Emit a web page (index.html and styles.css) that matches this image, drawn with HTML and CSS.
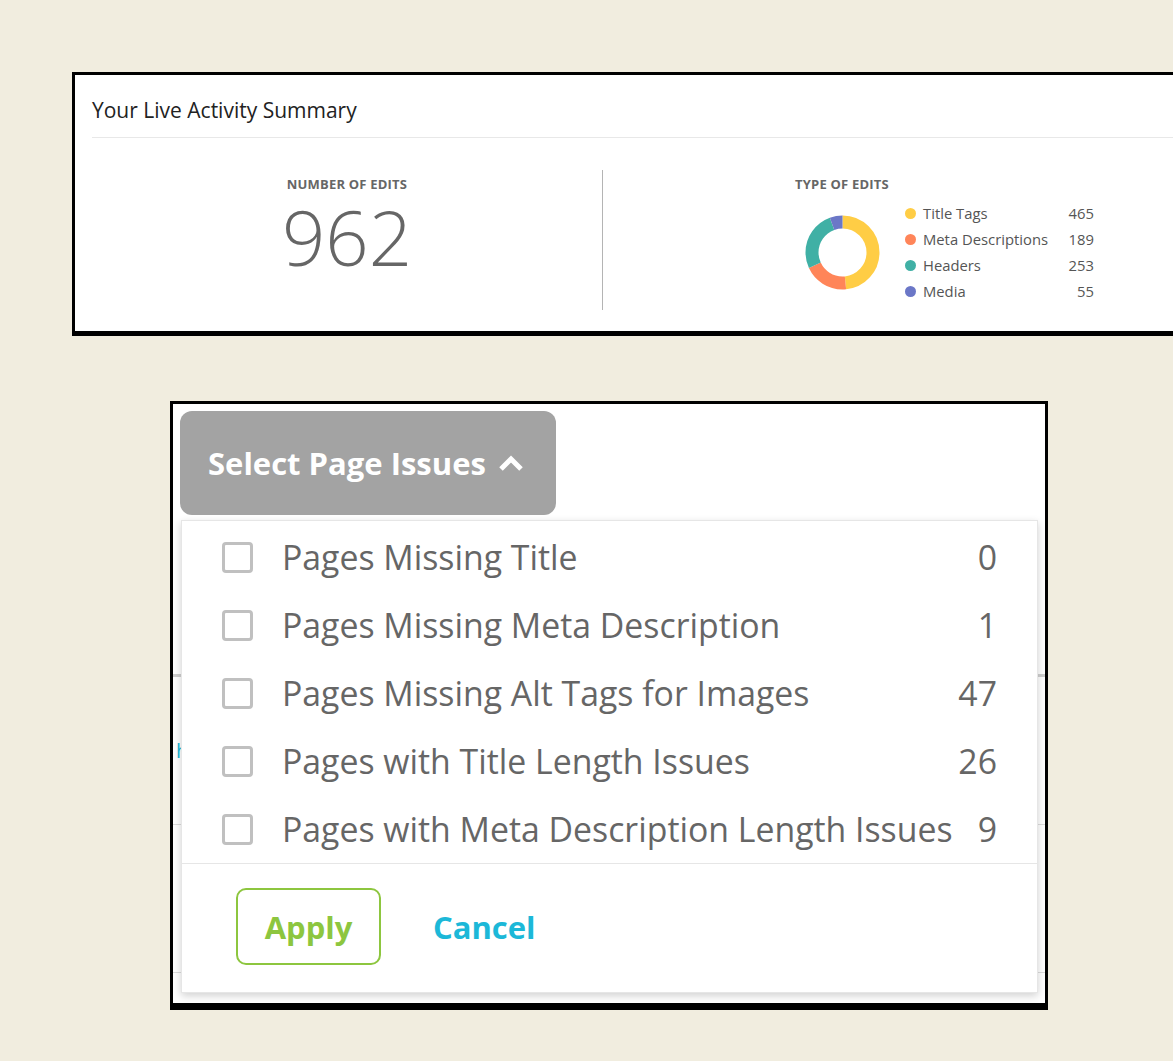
FILE: index.html
```html
<!DOCTYPE html>
<html lang="en">
  <head>
    <meta charset="UTF-8" />
    <meta name="viewport" content="width=device-width, initial-scale=1.0" />
    <title>Live Activity Summary</title>
    <link rel="stylesheet" href="styles.css">
  </head>
  <body>
    <div class="summary">
      <div class="summary-head">Your Live Activity Summary</div>
      <div class="stats">
        <div class="stat-count">
          <div class="stat-label">Number of Edits</div>
          <div class="stat-number">962</div>
        </div>
        <div class="stat-types">
          <div class="stat-label">Type of Edits</div>
          <div class="types-row">
            <svg class="donut" width="75" height="75" viewBox="0 0 75 75">
              <g transform="rotate(-90 37.5 37.5)" fill="none" stroke-width="13">
                <circle cx="37.5" cy="37.5" r="30.5" stroke="#ffcd45" stroke-dasharray="92.63 191.64" stroke-dashoffset="0" />
                <circle cx="37.5" cy="37.5" r="30.5" stroke="#ff8559" stroke-dasharray="37.65 191.64" stroke-dashoffset="-92.63" />
                <circle cx="37.5" cy="37.5" r="30.5" stroke="#40b0a5" stroke-dasharray="50.40 191.64" stroke-dashoffset="-130.28" />
                <circle cx="37.5" cy="37.5" r="30.5" stroke="#6b77c7" stroke-dasharray="10.96 191.64" stroke-dashoffset="-180.68" />
              </g>
            </svg>
            <div class="legend">
              <div class="legend-row"><span class="dot dot-yellow"></span><span class="legend-name">Title Tags</span><span class="legend-num">465</span></div>
              <div class="legend-row"><span class="dot dot-orange"></span><span class="legend-name">Meta Descriptions</span><span class="legend-num">189</span></div>
              <div class="legend-row"><span class="dot dot-teal"></span><span class="legend-name">Headers</span><span class="legend-num">253</span></div>
              <div class="legend-row"><span class="dot dot-purple"></span><span class="legend-name">Media</span><span class="legend-num">55</span></div>
            </div>
          </div>
        </div>
      </div>
    </div>

    <div class="issues">
      <button class="issues-toggle">
        Select Page Issues
        <svg class="chevron" width="26" height="18" viewBox="0 0 26 18">
          <polyline points="3,15 13,5 23,15" fill="none" stroke="#fff" stroke-width="5" />
        </svg>
      </button>

      <div class="under-table">
        <div class="under-row under-head"></div>
        <div class="under-row"><span class="under-link">http://</span></div>
        <div class="under-row"></div>
        <div class="under-row under-last"></div>
      </div>

      <div class="issues-menu">
        <div class="issue"><span class="check"></span><span class="issue-name">Pages Missing Title</span><span class="issue-num">0</span></div>
        <div class="issue"><span class="check"></span><span class="issue-name">Pages Missing Meta Description</span><span class="issue-num">1</span></div>
        <div class="issue"><span class="check"></span><span class="issue-name">Pages Missing Alt Tags for Images</span><span class="issue-num">47</span></div>
        <div class="issue"><span class="check"></span><span class="issue-name">Pages with Title Length Issues</span><span class="issue-num">26</span></div>
        <div class="issue"><span class="check"></span><span class="issue-name">Pages with Meta Description Length Issues</span><span class="issue-num">9</span></div>
        <div class="menu-actions">
          <button class="btn-apply">Apply</button>
          <button class="btn-cancel">Cancel</button>
        </div>
      </div>
    </div>
  </body>
</html>
```

FILE: styles.css
```css
body {
    margin: 0;
    padding-top: 72px;
    background-color: #f1eddf;
    font-family: "Open Sans", "Liberation Sans", sans-serif;
    overflow: hidden;
}

.summary {
    margin-left: 72px;
    height: 256px;
    padding-left: 17px;
    background: #fff;
    border: 3px solid #000;
    border-right: none;
    border-bottom-width: 5px;
}

.summary-head {
    padding: 22px 0 14px;
    font-size: 21px;
    line-height: 26px;
    color: #222;
    border-bottom: 1px solid #e8e8e8;
}

.stats {
    display: flex;
}

.stat-label {
    font-size: 13px;
    font-weight: 700;
    line-height: 16px;
    color: #666;
    text-transform: uppercase;
    letter-spacing: 0.2px;
}

.stat-count {
    width: 510px;
    padding-top: 38px;
    text-align: center;
}

.stat-number {
    margin-top: 15px;
    font-size: 76px;
    font-weight: 300;
    line-height: 60px;
    color: #666;
}

.stat-types {
    margin-top: 32px;
    height: 140px;
    padding-left: 192px;
    border-left: 1px solid #b4b4b4;
}

.stat-types .stat-label {
    margin-top: 6px;
}

.types-row {
    display: flex;
    align-items: center;
    margin-top: 8px;
}

.donut {
    margin-left: 10px;
    margin-right: 25px;
}

.legend-row {
    display: flex;
    align-items: center;
    height: 26px;
    font-size: 14.8px;
    color: #555;
}

.dot {
    width: 11px;
    height: 11px;
    margin-right: 7px;
    border-radius: 50%;
}

.dot-yellow { background: #ffcd45; }
.dot-orange { background: #ff8559; }
.dot-teal { background: #40b0a5; }
.dot-purple { background: #6b77c7; }

.legend-name {
    width: 126px;
    white-space: nowrap;
}

.legend-num {
    width: 45px;
    text-align: right;
}

.issues {
    position: relative;
    width: 872px;
    margin: 65px 0 0 170px;
    background: #fff;
    border: 3px solid #000;
    border-bottom-width: 7px;
}

.issues-toggle {
    display: flex;
    align-items: center;
    gap: 12px;
    width: 376px;
    height: 104px;
    margin: 7px 0 0 7px;
    padding: 0 0 0 28px;
    border: none;
    border-radius: 12px;
    background: #a3a3a3;
    color: #fff;
    font-family: inherit;
    font-size: 31px;
    font-weight: 700;
    cursor: pointer;
}

.under-table {
    margin-top: 14px;
}

.under-row {
    height: 147px;
    padding-left: 3px;
    border-bottom: 1px solid #dcdcdc;
    display: flex;
    align-items: center;
}

.under-head {
    height: 145px;
    border-bottom: 3px solid #cfcfcf;
}

.under-last {
    height: 30px;
    border-bottom: none;
}

.under-link {
    font-size: 20px;
    color: #19b6d5;
}

.issues-menu {
    position: absolute;
    top: 116px;
    left: 8px;
    width: 855px;
    padding-top: 2px;
    background: #fff;
    border: 1px solid #e6e6e6;
    box-shadow: 0 3px 8px rgba(0, 0, 0, 0.18);
}

.issue {
    display: flex;
    align-items: center;
    height: 68px;
    padding: 0 40px 0 40px;
    font-size: 33.8px;
    color: #666;
}

.check {
    box-sizing: border-box;
    width: 31px;
    height: 31px;
    margin-right: 29px;
    border: 3px solid #c0c0c0;
    border-radius: 4px;
}

.issue-name {
    flex: 1;
    white-space: nowrap;
}

.menu-actions {
    display: flex;
    align-items: center;
    padding: 24px 0 27px 54px;
    border-top: 1px solid #e6e6e6;
}

.btn-apply,
.btn-cancel {
    font-family: inherit;
    font-size: 31px;
    font-weight: 700;
    background: none;
    cursor: pointer;
}

.btn-apply {
    width: 145px;
    height: 77px;
    margin-right: 52px;
    border: 2px solid #8dc63f;
    border-radius: 10px;
    color: #8dc63f;
}

.btn-cancel {
    padding: 0;
    border: none;
    color: #1cb8d8;
}
```
